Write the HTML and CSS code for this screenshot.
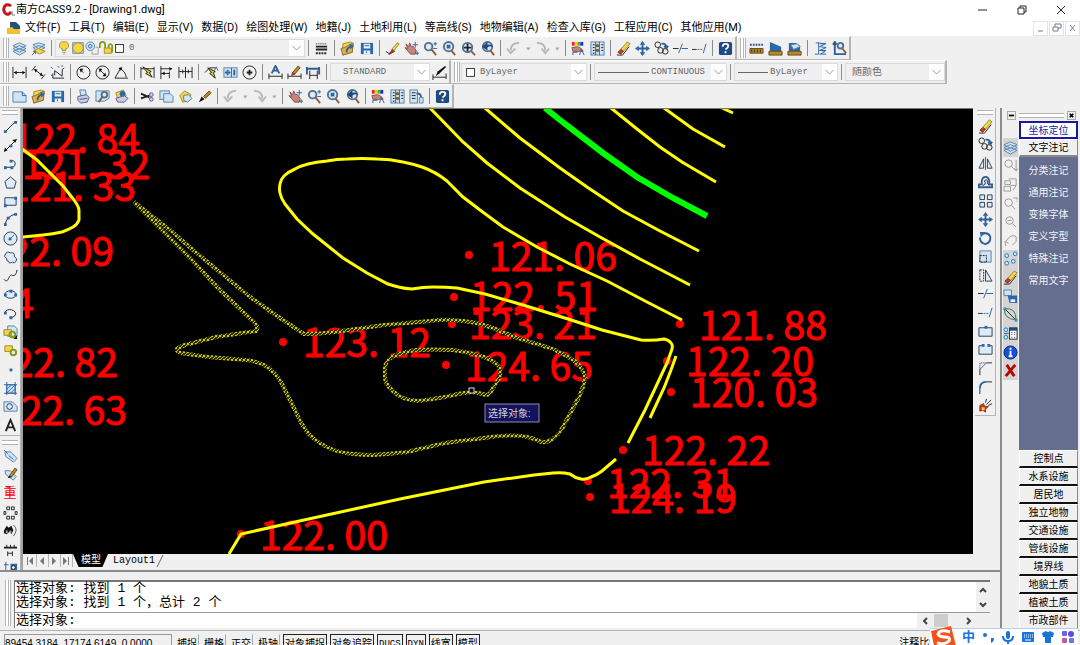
FILE: index.html
```html
<!DOCTYPE html>
<html lang="zh-CN">
<head>
    <meta charset="UTF-8">
    <meta name="viewport" content="width=device-width, initial-scale=1.0">
    <title>南方CASS9.2 - [Drawing1.dwg]</title>
    <link rel="stylesheet" href="styles.css">
</head>
<body>
    <!-- Icon sprite -->
    <svg class="sprite" aria-hidden="true">
        <symbol id="layers" viewBox="0 0 16 16"><path class="lb" d="M1 11l7-3 7 3-7 4zM1 8l7-3 7 3-7 4zM1 5l7-3 7 3-7 4z"/></symbol>
        <symbol id="layers2" viewBox="0 0 16 16"><path class="lb" d="M2 7l6-2 7 2-7 4zM2 4l6-2 7 2-7 4z"/><path class="y" d="M3 10l5-2 7 3-6 3z"/><path class="b" d="M1 15l4-4M2 11h3v3"/></symbol>
        <symbol id="bulb" viewBox="0 0 16 16"><path class="y" d="M8 1a4 4 0 0 0-2 8v2h4V9a4 4 0 0 0-2-8z"/><path class="g" d="M6 13h4M7 15h2"/></symbol>
        <symbol id="sun" viewBox="0 0 16 16"><rect class="lb" x="2" y="2" width="12" height="12"/><circle class="y" cx="8" cy="8" r="6"/></symbol>
        <symbol id="freeze" viewBox="0 0 16 16"><circle class="lb" cx="6" cy="6" r="5"/><circle class="b" cx="6" cy="6" r="2"/><path class="g" d="M12 7h3v8H8v-3"/></symbol>
        <symbol id="lock" viewBox="0 0 16 16"><path class="ol" d="M1 8V4q0-3 3-3t3 3v4"/><rect class="y" x="6" y="8" width="8" height="6"/><path class="ol" d="M11 8V5q2-3 4 0v8"/></symbol>
        <symbol id="swatch" viewBox="0 0 16 16"><rect class="w" x="3" y="4" width="9" height="9"/></symbol>
        <symbol id="weight" viewBox="0 0 16 16"><path class="k" d="M2 3h12" stroke-dasharray="1 1"/><path class="k2" d="M2 6h12M2 9h12"/><path class="k2" d="M2 13h12" stroke-dasharray="2 1"/></symbol>
        <symbol id="open" viewBox="0 0 16 16"><path class="y" d="M3 3l8-2 3 2-1 9-10 3z"/><path class="or" d="M3 15L1 8l4-1 9-5-1 10z"/><path class="b2" d="M7 12q0-5 5-6"/><path class="fb" d="M10 3l5 2-4 4z"/></symbol>
        <symbol id="save" viewBox="0 0 16 16"><path class="fb" d="M2 2h13v12H2z"/><path class="fw" d="M5 3h7v5H5zM5 10h7v4H5z"/><path class="b" d="M6 5h5M8 11v2"/></symbol>
        <symbol id="match" viewBox="0 0 16 16"><path class="k" d="M1 11l4 3 5-3"/><path class="y" d="M7 9l6-7 2 1-6 8z"/><path class="rd" d="M4 14l4-5 2 2z"/></symbol>
        <symbol id="pan" viewBox="0 0 16 16"><path class="hand" d="M2 3l3 3 1-4 2 4 2 0 3 4-1 4H7L1 7l3 1z"/><path class="b" d="M12 1v6M9 4h6M14 11v4M12 13h4"/></symbol>
        <symbol id="zoom" viewBox="0 0 16 16"><circle class="lens" cx="6" cy="6" r="4"/><path class="h" d="M9 9l5 6"/><path class="b" d="M11 3h4M13 1v4M11 8h4"/></symbol>
        <symbol id="zoomwin" viewBox="0 0 16 16"><circle class="lens" cx="7" cy="6" r="5"/><path class="h" d="M10 10l4 5"/><rect class="fb" x="5" y="4" width="4" height="4"/></symbol>
        <symbol id="zoomext" viewBox="0 0 16 16"><circle class="lens" cx="7" cy="7" r="5"/><path class="h" d="M11 11l4 4"/><path class="k2" d="M7 3v8M3 7h8"/></symbol>
        <symbol id="zoomprev" viewBox="0 0 16 16"><circle class="lens" cx="8" cy="6" r="5"/><path class="h" d="M11 10l4 5"/><path class="nv" d="M2 6l6-5v3q5-1 6 2-4-1-6 1v3z"/></symbol>
        <symbol id="undo" viewBox="0 0 16 16"><path class="gr" d="M14 2Q5 2 5 10M1 8l4 5 5-5"/></symbol>
        <symbol id="redo" viewBox="0 0 16 16"><path class="gr" d="M2 2q9 0 9 8M7 8l4 5 4-5"/></symbol>
        <symbol id="drop" viewBox="0 0 8 16"><path class="fg" d="M2 7h5L4 10z"/></symbol>
        <symbol id="palette" viewBox="0 0 16 16"><path fill="#e22" d="M1 1h3v4H1z"/><path fill="#fc0" d="M4 1h3v4H4z"/><path fill="#3b3" d="M7 1h3v4H7z"/><path fill="#22d" d="M10 1h3v4h-3z"/><path class="hand" d="M1 7l6-1 4 2 2 3-4 0-7 0z"/><path class="b" d="M2 15v-3h5M9 15l2-6 3 6"/></symbol>
        <symbol id="props" viewBox="0 0 16 16"><rect class="lb" x="1" y="1" width="14" height="14"/><path class="b" d="M6 1v14M10 1v14"/><path class="k" d="M3 4h2M3 7h2M3 10h2M3 13h2M12 4h2M12 7h2M12 10h2"/><path class="br" d="M7 4h2v2H7zM7 9h2v2H7z"/></symbol>
        <symbol id="sheet" viewBox="0 0 16 16"><rect class="lb" x="1" y="1" width="8" height="14"/><path class="k" d="M3 4h4M3 7h4M3 10h4"/><path class="b2" d="M8 5q5-1 5 5"/><path class="lb" d="M11 9h4v6h-4z"/></symbol>
        <symbol id="erase" viewBox="0 0 16 16"><path class="y" d="M5 9l7-8 3 2-7 8z"/><path class="rd" d="M2 12l3-3 3 2-3 3z"/><path class="k" d="M1 15h6l7-9"/></symbol>
        <symbol id="move" viewBox="0 0 16 16"><path class="b2" d="M8 2v12M2 8h12"/><path class="fb" d="M5 4l3-4 3 4zM5 12l3 4 3-4zM4 5L0 8l4 3zM12 5l4 3-4 3z"/></symbol>
        <symbol id="copy" viewBox="0 0 16 16"><circle class="k" cx="4" cy="4" r="3"/><circle class="k" cx="7" cy="10" r="3"/><circle class="k" cx="12" cy="11" r="3"/><path class="b2" d="M8 3q5-1 5 4M11 5l2 3 2-3"/></symbol>
        <symbol id="trim" viewBox="0 0 16 16"><path class="k" d="M0 8h6"/><path class="b" d="M10 3L6 13M9 8h7" /></symbol>
        <symbol id="extend" viewBox="0 0 16 16"><path class="k" d="M0 9h5"/><path class="b" d="M6 9h6" stroke-dasharray="2 1"/><path class="b" d="M15 3l-3 10"/></symbol>
        <symbol id="help" viewBox="0 0 16 16"><rect class="nv" x="1" y="1" width="14" height="14" rx="2"/><path class="wl" d="M5 6q0-3 3-3t3 2-3 4M8 11v2"/></symbol>
        <symbol id="dist" viewBox="0 0 16 16"><path class="b2" d="M1 4h14" stroke-dasharray="2 1"/><path class="br" d="M1 8h14v5H1z"/><path class="k" d="M3 12V9M6 12V9M9 12V9M12 12V9"/></symbol>
        <symbol id="area" viewBox="0 0 16 16"><path class="fb" d="M2 1l12 5v5H2z"/><path class="br" d="M1 11h14v4H1z"/></symbol>
        <symbol id="region" viewBox="0 0 16 16"><path class="fb" d="M2 2h7l5 3v6H2z"/><path class="lb" d="M4 4l7-1 3 3-7 3z"/><path class="br" d="M1 11h14v4H1z"/></symbol>
        <symbol id="list" viewBox="0 0 16 16"><path class="b" d="M3 2h3v12H2M6 2l7 1-6 3 7 1-7 3 6 1-5 3M8 3h6M8 10h6M7 14h7"/></symbol>
        <symbol id="locate" viewBox="0 0 16 16"><path class="b2" d="M3 3v11h12M1 4l2-3 2 3"/><circle class="lens" cx="9" cy="5" r="3"/><path class="h" d="M11 8l4 5"/></symbol>
        <symbol id="dim" viewBox="0 0 16 16"><path class="k" d="M1 2v12M15 2v12M2 8h12"/><path class="fk" d="M2 8l3-2v4zM14 8l-3-2v4z"/></symbol>
        <symbol id="dimal" viewBox="0 0 16 16"><path class="k" d="M5 1L1 6M15 10l-4 5M4 5l8 6"/><path class="fk" d="M3 4l4 1-2 3zM13 12l-4-1 2-3z"/></symbol>
        <symbol id="ordi" viewBox="0 0 16 16"><path class="k" d="M3 14h12M3 14V9M5 11V6l8 6V5l2-2"/><path class="b" d="M1 2l2 2M8 1l2 2M1 11h2M12 1h2"/></symbol>
        <symbol id="rad" viewBox="0 0 16 16"><circle class="k" cx="8" cy="8" r="7"/><path class="k" d="M8 8L4 5"/><path class="fk" d="M4 4h4L5 8z"/></symbol>
        <symbol id="dia" viewBox="0 0 16 16"><circle class="k" cx="8" cy="8" r="7"/><path class="k" d="M4 4l8 8"/><path class="fk" d="M4 4h4L5 8zM12 12H8l3-4z"/></symbol>
        <symbol id="ang" viewBox="0 0 16 16"><path class="k" d="M8 2L1 14h14M6 4q6 2 7 9"/><path class="fk" d="M5 3l4 0-2 3z"/></symbol>
        <symbol id="qdim" viewBox="0 0 16 16"><path class="k" d="M1 2v12M15 2v12M1 4h14"/><path class="yk" d="M3 2l9 5-2 1 3 5-7-4 2-1z"/></symbol>
        <symbol id="base" viewBox="0 0 16 16"><path class="k" d="M2 1v14M2 4h12M2 9h9M11 7v7"/><path class="fk" d="M14 4l-3-2v4zM3 9l3-2v4z"/></symbol>
        <symbol id="cont" viewBox="0 0 16 16"><path class="k" d="M1 2v12M8 2v12M15 2v12M1 7h14M5 5v4M11 5v4"/></symbol>
        <symbol id="leader" viewBox="0 0 16 16"><path class="yk" d="M4 3l8 4-2 1 2 6-6-5 2-1z"/><path class="k" d="M1 8l5-5h6"/><path class="b" d="M11 6l2-4 2 4"/></symbol>
        <symbol id="tol" viewBox="0 0 16 16"><rect class="lb" x="1" y="3" width="14" height="10"/><path class="b" d="M9 3v10M2 8h6M5 5v6"/><circle class="b" cx="5" cy="8" r="2"/><path class="b2" d="M12 5v6"/></symbol>
        <symbol id="cen" viewBox="0 0 16 16"><circle class="k" cx="8" cy="8" r="7"/><path class="k2" d="M8 5v6M5 8h6"/></symbol>
        <symbol id="dimA" viewBox="0 0 16 16"><path class="b2" d="M4 9l4-8 4 8M5 6h6"/><path class="k" d="M1 9v6M15 9v6M1 12h14"/></symbol>
        <symbol id="dimE" viewBox="0 0 16 16"><path class="k" d="M1 9v6M15 9v6M1 12h14"/><path class="br" d="M6 8l6-7 2 2-6 7z"/><path class="rd" d="M5 11l1-3 2 2z"/></symbol>
        <symbol id="dimU" viewBox="0 0 16 16"><path class="b2" d="M1 2v8M14 2v8M1 4h13"/><path class="k" d="M4 6v9M12 6v9M4 11h8"/></symbol>
        <symbol id="dimS" viewBox="0 0 16 16"><path class="k" d="M1 10v6M15 9v6M1 13h14"/><path class="fk" d="M4 12l2-5 8-6 1 1-7 7z"/></symbol>
        <symbol id="new" viewBox="0 0 16 16"><path class="lb" d="M1 3h10l4 4v7H1z"/><path class="b" d="M11 3v4h4"/></symbol>
        <symbol id="print" viewBox="0 0 16 16"><path class="lb" d="M4 1h6l1 6H5z"/><path class="pl" d="M2 8l9-2 3 3-2 5-7 1-3-3zM4 11l8-1"/></symbol>
        <symbol id="preview" viewBox="0 0 16 16"><path class="lb" d="M1 2h14v8L10 13H1z"/><circle class="lens" cx="10" cy="6" r="3"/><path class="h" d="M8 8l-4 6"/></symbol>
        <symbol id="publish" viewBox="0 0 16 16"><path class="y" d="M2 4l8-3 3 6-9 4z"/><path class="pl" d="M2 10l9-3 4 3-4 4H4z"/><circle class="fb" cx="9" cy="5" r="3"/></symbol>
        <symbol id="cut" viewBox="0 0 16 16"><path class="k2" d="M1 5l9 4M1 10l9-3"/><circle class="pl" cx="12" cy="6" r="2"/><circle class="pl" cx="12" cy="11" r="2"/></symbol>
        <symbol id="cpy" viewBox="0 0 16 16"><rect class="lb" x="1" y="2" width="10" height="9"/><path class="lb" d="M5 5h7l3 3v6H5z"/></symbol>
        <symbol id="paste" viewBox="0 0 16 16"><path class="y" d="M2 7l5-5 7 4-4 7-5 1z"/><path class="lb" d="M6 7l5-1 4 4-5 4-4-2z"/></symbol>
        <symbol id="brush" viewBox="0 0 16 16"><path class="br" d="M7 8l6-6 2 2-6 6z"/><path class="fk" d="M2 14l3-6 3 3z"/></symbol>
        <symbol id="line" viewBox="0 0 16 16"><path class="k" d="M3 13L13 3"/><path class="fb" d="M1 12h3v3H1zM12 2h3v3h-3z"/></symbol>
        <symbol id="xline" viewBox="0 0 16 16"><path class="k" d="M3 13L13 3"/><path class="fk" d="M1 15l1-5 3 3zM15 1l-5 1 3 3z"/><path class="fb" d="M7 7h3v3H7z"/></symbol>
        <symbol id="pline" viewBox="0 0 16 16"><path class="k" d="M2 12h8M8 5h3q4 3 0 7"/><path class="fb" d="M1 11h3v3H1zM8 11h3v3H8zM7 4h3v3H7z"/></symbol>
        <symbol id="poly" viewBox="0 0 16 16"><path class="ld" d="M8 2l6 5-2 7H4L2 7z"/></symbol>
        <symbol id="rect" viewBox="0 0 16 16"><path class="ld" d="M2 4h12v8H2z"/><path class="fb" d="M1 11h3v3H1zM12 3h3v3h-3z"/></symbol>
        <symbol id="arc" viewBox="0 0 16 16"><path class="k" d="M2 14Q4 4 14 2"/><path class="fb" d="M1 12h3v3H1zM4 5h3v3H4zM12 1h3v3h-3z"/></symbol>
        <symbol id="circle" viewBox="0 0 16 16"><circle class="ld" cx="8" cy="8" r="7"/><path class="b" d="M8 8l4-4"/><path class="fb" d="M6 7h3v3H6z"/></symbol>
        <symbol id="cloud" viewBox="0 0 16 16"><path class="ld" d="M4 9Q0 7 3 4q1-3 5-1 5-1 4 4 4 2 2 5-2 3-4 1-4 2-4-1-3 0-2-3z"/></symbol>
        <symbol id="spline" viewBox="0 0 16 16"><path class="k" d="M1 12q3 4 5-1t4-3q4 1 5-6"/></symbol>
        <symbol id="ellipse" viewBox="0 0 16 16"><ellipse class="ld" cx="8" cy="8" rx="6" ry="4"/><path class="fb" d="M1 7h3v3H1zM12 7h3v3h-3zM7 3h3v3H7z"/></symbol>
        <symbol id="earc" viewBox="0 0 16 16"><path class="k" d="M2 7q2-4 7-3 6 2 4 6-2 3-6 2"/><path class="fb" d="M1 6h3v3H1zM7 11h3v3H7z"/></symbol>
        <symbol id="insert" viewBox="0 0 16 16"><path class="lb" d="M5 1h7l3 3v8H5z"/><path class="y" d="M1 5h8v6H1z"/><circle class="ol" cx="10" cy="10" r="3"/><path class="fk" d="M15 11v4h-4z"/></symbol>
        <symbol id="block" viewBox="0 0 16 16"><path class="y" d="M2 3h8v6H2z"/><circle class="ld" cx="11" cy="10" r="3"/><circle class="ol" cx="11" cy="10" r="3"/></symbol>
        <symbol id="point" viewBox="0 0 16 16"><path class="fb" d="M7 7h3v3H7z"/></symbol>
        <symbol id="hatch" viewBox="0 0 16 16"><path class="lb" d="M4 4h9v9H4z"/><path class="b" d="M1 4h14M1 13h14M4 1v14M13 1v14M4 9l5-5M4 13l9-9M8 13l5-5"/></symbol>
        <symbol id="reg" viewBox="0 0 16 16"><path class="lb" d="M1 3h9l5 5v5H1z"/><circle class="ld" cx="7" cy="8" r="3"/></symbol>
        <symbol id="mtext" viewBox="0 0 16 16"><path class="k2" d="M3 14L8 2l5 12M5 10h6"/></symbol>
        <symbol id="tag" viewBox="0 0 16 16"><path class="lb" d="M2 3h6l7 7-4 4-8-6z"/><path class="b" d="M1 1l4 4M6 7l5 4"/></symbol>
        <symbol id="tagedit" viewBox="0 0 16 16"><path class="lb" d="M2 4h6l6 6-3 4-8-6z"/><path class="br" d="M7 9l6-8 2 2-6 8z"/><path class="fk" d="M5 12l2-3 2 2z"/></symbol>
        <symbol id="nodes" viewBox="0 0 16 16"><path class="k" d="M4 2h3v3H4zM9 2h3v3H9zM1 7h2v3H1zM13 7h2v3h-2zM4 12h3v3H4zM9 12h3v3H9z"/></symbol>
        <symbol id="find" viewBox="0 0 16 16"><path class="fk" d="M1 8l3-5 2 2 3-2 2 5-2 4-2-3-3 3-3-1z"/><path class="fg" d="M3 8h2v3H3zM7 8h2v3H7z"/><path class="b" d="M11 2q6 5 0 12"/></symbol>
        <symbol id="gate" viewBox="0 0 16 16"><path class="k2" d="M1 6h14"/><path class="k" d="M4 3v3M8 3v3M12 3v3M5 10v5M10 10v5M5 12h5"/></symbol>
        <symbol id="pinbox" viewBox="0 0 16 16"><path class="b" d="M3 2v13M1 5h5"/><rect class="fb" x="8" y="4" width="7" height="8"/><circle class="w" cx="11" cy="8" r="2"/></symbol>
        <symbol id="mirror" viewBox="0 0 16 16"><path class="ld" d="M6 3v10H1zM10 3v10h5z"/><path class="b" d="M8 1v14"/></symbol>
        <symbol id="offset" viewBox="0 0 16 16"><path class="b2" d="M1 13h14v-3h-3V6q-1-4-4-4T4 6v4H1z"/><path class="k" d="M5 11q4 0 2-5 2-2 3 0-1 4 2 5"/></symbol>
        <symbol id="array" viewBox="0 0 16 16"><path class="ld" d="M2 2h5v5H2zM10 2h5v5h-5zM2 10h5v5H2zM10 10h5v5h-5z"/></symbol>
        <symbol id="rotate" viewBox="0 0 16 16"><path class="b2" d="M5 3q6-2 8 3 1 6-5 8-6-1-6-7"/><path class="fb" d="M2 1h6L3 7z"/></symbol>
        <symbol id="scale" viewBox="0 0 16 16"><path class="lb" d="M2 2h12v12H2z"/><path class="k" d="M2 7h7v7H2z" stroke-dasharray="2 1"/></symbol>
        <symbol id="stretch" viewBox="0 0 16 16"><path class="k" d="M2 2v12h4V2z" stroke-dasharray="2 1"/><path class="ld" d="M8 2l7 12H8z"/></symbol>
        <symbol id="breakpt" viewBox="0 0 16 16"><path class="ld" d="M1 4h14v9H1z"/><path class="fb" d="M7 2h3v3H7z"/></symbol>
        <symbol id="break" viewBox="0 0 16 16"><path class="ld" d="M5 4H1v9h14V4h-4"/><path class="fb" d="M4 2h3v3H4zM10 2h3v3h-3z"/></symbol>
        <symbol id="chamfer" viewBox="0 0 16 16"><path class="k" d="M2 15V9M9 2h6"/><path class="b" d="M2 9l7-7"/><path class="k" d="M2 9V2h7" stroke-dasharray="1 1"/></symbol>
        <symbol id="fillet" viewBox="0 0 16 16"><path class="k" d="M2 15V9M9 2h6"/><path class="b2" d="M2 9q0-7 7-7"/></symbol>
        <symbol id="explode" viewBox="0 0 16 16"><path class="rd" d="M2 8l4-2 1 3 4 0-3 3 0 3-3-2-3 1z"/><path class="yf" d="M4 10h3v3H4z"/><path class="k" d="M9 7l5-5M11 8l4-2M8 5l1-4"/></symbol>
        <symbol id="zg" viewBox="0 0 16 16"><circle class="g" cx="6" cy="6" r="4"/><path class="g" d="M9 9l4 4M14 2v11M12 11l2 3 2-3"/></symbol>
        <symbol id="zg2" viewBox="0 0 16 16"><circle class="g" cx="6" cy="7" r="4"/><path class="g" d="M9 10l5 5M11 2h4v4" stroke-dasharray="6 1"/></symbol>
        <symbol id="zg3" viewBox="0 0 16 16"><circle class="g" cx="7" cy="7" r="4"/><path class="g" d="M10 10l4 4M5 7h4"/></symbol>
        <symbol id="boxes" viewBox="0 0 16 16"><path class="g" d="M2 4h6v4H2zM6 2h8v7H8M1 10h7v5H1zM14 9l-3 5"/></symbol>
        <symbol id="back" viewBox="0 0 16 16"><path class="g" d="M3 14L2 9l4 2M3 9q6-9 11-5v5l-4 4"/></symbol>
        <symbol id="dots" viewBox="0 0 16 16"><circle class="cy" cx="4" cy="5" r="2"/><circle class="cy" cx="13" cy="3" r="2"/><circle class="cy" cx="4" cy="13" r="2"/><circle class="cy" cx="11" cy="11" r="2"/></symbol>
        <symbol id="disk" viewBox="0 0 16 16"><path class="lb" d="M1 1h8v6H1z"/><path class="fb" d="M5 7h10v8H7z"/><path class="fw" d="M8 11h5v3H8z"/></symbol>
        <symbol id="curve" viewBox="0 0 16 16"><path class="k" d="M1 1l14 14"/><path class="gn" d="M2 2q12-2 12 12M2 2q-2 10 12 12"/><path class="cy" d="M1 1h2v2H1zM13 13h2v2h-2z"/></symbol>
        <symbol id="calc" viewBox="0 0 16 16"><circle class="cy" cx="3" cy="4" r="2"/><circle class="cy" cx="3" cy="12" r="2"/><path class="b" d="M1 8h5"/><rect class="w" x="7" y="2" width="8" height="12"/><path class="nv" d="M7 2h8v3H7z"/><path class="k" d="M9 7h1M12 7h1M9 9h1M12 9h1M9 12h1M12 12h1"/></symbol>
        <symbol id="info" viewBox="0 0 16 16"><circle fill="#1450d8" stroke="#0a2a80" cx="8" cy="8" r="7"/><path class="wl" d="M8 3v2M7 7h1v5M6 12h4"/></symbol>
        <symbol id="cross" viewBox="0 0 16 16"><path d="M4 2l8 12M13 2L3 14" stroke="#b80000" stroke-width="3"/></symbol>
        <symbol id="chev" viewBox="0 0 12 12"><path class="g" d="M2 4l4 4 4-4"/></symbol>
        <pattern id="sel" width="4" height="4" patternUnits="userSpaceOnUse"><rect width="4" height="4" fill="#2c2c00"/><path d="M0 0h1v1H0zM2 1h1v1H2zM1 2h1v1H1zM3 3h1v1H3zM3 0h1v1H3zM0 3h1v1H0z" fill="#d0d000"/></pattern>
    </svg>

    <header class="titlebar">
        <svg class="logo" viewBox="0 0 14 14"><path d="M9 3Q7 1 4 2 1 4 2 8q1 4 5 3l2-2" fill="none" stroke="#c4141c" stroke-width="3"/><path d="M10 8v4h3" fill="none" stroke="#777"/></svg>
        <h1>南方CASS9.2 - [Drawing1.dwg]</h1>
        <div class="winbtns">
            <button aria-label="最小化"><svg viewBox="0 0 10 10"><path d="M0 5h9"/></svg></button>
            <button aria-label="还原"><svg viewBox="0 0 10 10"><path d="M1 3h6v6H1zM3 3V1h6v6H7"/></svg></button>
            <button aria-label="关闭"><svg viewBox="0 0 10 10"><path d="M1 1l8 8M9 1L1 9"/></svg></button>
        </div>
    </header>

    <nav class="menubar">
        <svg class="docicon" viewBox="0 0 14 14"><path d="M3 1h6l4 4v6H3z" fill="#24507c"/><path d="M0 7l5-1 2 2h6v5H0z" fill="#f0c030"/></svg>
        <button>文件(F)</button>
        <button>工具(T)</button>
        <button>编辑(E)</button>
        <button>显示(V)</button>
        <button>数据(D)</button>
        <button>绘图处理(W)</button>
        <button>地籍(J)</button>
        <button>土地利用(L)</button>
        <button>等高线(S)</button>
        <button>地物编辑(A)</button>
        <button>检查入库(G)</button>
        <button>工程应用(C)</button>
        <button>其他应用(M)</button>
        <div class="docbtns">
            <button aria-label="最小化图形"><svg viewBox="0 0 10 10"><path d="M2 8h5"/></svg></button>
            <button aria-label="还原图形"><svg viewBox="0 0 10 10"><path d="M1 4h5v4H1zM3 4V1h6v4H6"/></svg></button>
            <button aria-label="关闭图形"><svg viewBox="0 0 10 10"><path d="M2 2l5 6M7 2L2 8"/></svg></button>
        </div>
    </nav>

    <!-- Toolbars -->
    <div class="row">
        <div class="toolbar">
            <i class="grip"></i>
            <button class="tool" aria-label="图层"><svg><use href="#layers"/></svg></button>
            <button class="tool" aria-label="图层置为当前"><svg><use href="#layers2"/></svg></button>
            <i class="sep"></i>
            <div class="combo layer">
                <svg><use href="#bulb"/></svg><svg><use href="#sun"/></svg><svg><use href="#freeze"/></svg><svg><use href="#lock"/></svg><svg><use href="#swatch"/></svg>
                <select aria-label="图层列表"><option>0</option></select>
                <svg class="chev"><use href="#chev"/></svg>
            </div>
            <i class="sep"></i>
            <button class="tool" aria-label="线宽"><svg><use href="#weight"/></svg></button>
            <i class="sep"></i>
            <button class="tool" aria-label="打开"><svg><use href="#open"/></svg></button>
            <button class="tool" aria-label="保存"><svg><use href="#save"/></svg></button>
            <i class="sep"></i>
            <button class="tool" aria-label="特性匹配"><svg><use href="#match"/></svg></button>
            <button class="tool" aria-label="平移"><svg><use href="#pan"/></svg></button>
            <button class="tool" aria-label="实时缩放"><svg><use href="#zoom"/></svg></button>
            <button class="tool" aria-label="窗口缩放"><svg><use href="#zoomwin"/></svg></button>
            <button class="tool" aria-label="范围缩放"><svg><use href="#zoomext"/></svg></button>
            <button class="tool" aria-label="上一个视图"><svg><use href="#zoomprev"/></svg></button>
            <i class="sep"></i>
            <button class="tool" aria-label="放弃"><svg><use href="#undo"/></svg></button>
            <button class="tool drop" aria-label="放弃列表"><svg><use href="#drop"/></svg></button>
            <button class="tool" aria-label="重做"><svg><use href="#redo"/></svg></button>
            <button class="tool drop" aria-label="重做列表"><svg><use href="#drop"/></svg></button>
            <i class="sep"></i>
            <button class="tool" aria-label="特性"><svg><use href="#palette"/></svg></button>
            <button class="tool" aria-label="设计中心"><svg><use href="#props"/></svg></button>
            <i class="sep"></i>
            <button class="tool" aria-label="删除"><svg><use href="#erase"/></svg></button>
            <button class="tool" aria-label="移动"><svg><use href="#move"/></svg></button>
            <button class="tool" aria-label="复制"><svg><use href="#copy"/></svg></button>
            <button class="tool" aria-label="修剪"><svg><use href="#trim"/></svg></button>
            <button class="tool" aria-label="延伸"><svg><use href="#extend"/></svg></button>
            <i class="sep"></i>
            <button class="tool" aria-label="帮助"><svg><use href="#help"/></svg></button>
        </div>
        <div class="toolbar">
            <i class="grip"></i>
            <button class="tool" aria-label="距离"><svg><use href="#dist"/></svg></button>
            <button class="tool" aria-label="面积"><svg><use href="#area"/></svg></button>
            <button class="tool" aria-label="面域特性"><svg><use href="#region"/></svg></button>
            <i class="sep"></i>
            <button class="tool" aria-label="列表"><svg><use href="#list"/></svg></button>
            <button class="tool" aria-label="定位点"><svg><use href="#locate"/></svg></button>
        </div>
    </div>

    <div class="row">
        <div class="toolbar">
            <i class="grip"></i>
            <button class="tool" aria-label="线性标注"><svg><use href="#dim"/></svg></button>
            <button class="tool" aria-label="对齐标注"><svg><use href="#dimal"/></svg></button>
            <button class="tool" aria-label="坐标标注"><svg><use href="#ordi"/></svg></button>
            <i class="sep"></i>
            <button class="tool" aria-label="半径标注"><svg><use href="#rad"/></svg></button>
            <button class="tool" aria-label="直径标注"><svg><use href="#dia"/></svg></button>
            <button class="tool" aria-label="角度标注"><svg><use href="#ang"/></svg></button>
            <i class="sep"></i>
            <button class="tool" aria-label="快速标注"><svg><use href="#qdim"/></svg></button>
            <button class="tool" aria-label="基线标注"><svg><use href="#base"/></svg></button>
            <button class="tool" aria-label="连续标注"><svg><use href="#cont"/></svg></button>
            <i class="sep"></i>
            <button class="tool" aria-label="快速引线"><svg><use href="#leader"/></svg></button>
            <button class="tool" aria-label="公差"><svg><use href="#tol"/></svg></button>
            <button class="tool" aria-label="圆心标记"><svg><use href="#cen"/></svg></button>
            <i class="sep"></i>
            <button class="tool" aria-label="编辑标注"><svg><use href="#dimA"/></svg></button>
            <button class="tool" aria-label="编辑标注文字"><svg><use href="#dimE"/></svg></button>
            <button class="tool" aria-label="标注更新"><svg><use href="#dimU"/></svg></button>
            <i class="sep"></i>
            <div class="combo style">
                <select aria-label="标注样式列表"><option>STANDARD</option></select>
                <svg class="chev"><use href="#chev"/></svg>
            </div>
            <button class="tool" aria-label="标注样式"><svg><use href="#dimS"/></svg></button>
        </div>
        <div class="toolbar">
            <i class="grip"></i>
            <div class="combo color">
                <svg><use href="#swatch"/></svg>
                <select aria-label="颜色"><option>ByLayer</option></select>
                <svg class="chev"><use href="#chev"/></svg>
            </div>
            <i class="sep"></i>
            <div class="combo ltype">
                <i class="rule long"></i>
                <select aria-label="线型"><option>CONTINUOUS</option></select>
                <svg class="chev"><use href="#chev"/></svg>
            </div>
            <i class="sep"></i>
            <div class="combo lweight">
                <i class="rule"></i>
                <select aria-label="线宽列表"><option>ByLayer</option></select>
                <svg class="chev"><use href="#chev"/></svg>
            </div>
            <i class="sep"></i>
            <div class="combo plot">
                <select aria-label="打印样式"><option>随颜色</option></select>
                <svg class="chev"><use href="#chev"/></svg>
            </div>
        </div>
    </div>

    <div class="row">
        <div class="toolbar">
            <i class="grip"></i>
            <button class="tool" aria-label="新建"><svg><use href="#new"/></svg></button>
            <button class="tool" aria-label="打开文件"><svg><use href="#open"/></svg></button>
            <button class="tool" aria-label="保存文件"><svg><use href="#save"/></svg></button>
            <i class="sep"></i>
            <button class="tool" aria-label="打印"><svg><use href="#print"/></svg></button>
            <button class="tool" aria-label="打印预览"><svg><use href="#preview"/></svg></button>
            <button class="tool" aria-label="发布"><svg><use href="#publish"/></svg></button>
            <i class="sep"></i>
            <button class="tool" aria-label="剪切"><svg><use href="#cut"/></svg></button>
            <button class="tool" aria-label="复制到剪贴板"><svg><use href="#cpy"/></svg></button>
            <button class="tool" aria-label="粘贴"><svg><use href="#paste"/></svg></button>
            <button class="tool" aria-label="格式刷"><svg><use href="#brush"/></svg></button>
            <i class="sep"></i>
            <button class="tool" aria-label="撤销"><svg><use href="#undo"/></svg></button>
            <button class="tool drop" aria-label="撤销列表"><svg><use href="#drop"/></svg></button>
            <button class="tool" aria-label="恢复"><svg><use href="#redo"/></svg></button>
            <button class="tool drop" aria-label="恢复列表"><svg><use href="#drop"/></svg></button>
            <i class="sep"></i>
            <button class="tool" aria-label="平移视图"><svg><use href="#pan"/></svg></button>
            <button class="tool" aria-label="缩放"><svg><use href="#zoom"/></svg></button>
            <button class="tool" aria-label="缩放窗口"><svg><use href="#zoomwin"/></svg></button>
            <button class="tool" aria-label="缩放上一个"><svg><use href="#zoomprev"/></svg></button>
            <i class="sep"></i>
            <button class="tool" aria-label="对象特性"><svg><use href="#palette"/></svg></button>
            <button class="tool" aria-label="工具选项板"><svg><use href="#props"/></svg></button>
            <button class="tool" aria-label="图纸集"><svg><use href="#sheet"/></svg></button>
            <i class="sep"></i>
            <button class="tool" aria-label="帮助主题"><svg><use href="#help"/></svg></button>
        </div>
    </div>

    <div class="workspace">
        <div class="main">
            <div class="editor">
                <div class="side left">
                    <div class="vbar draw">
                        <i class="hgrip"></i>
                        <button class="tool" aria-label="直线"><svg><use href="#line"/></svg></button>
                        <button class="tool" aria-label="构造线"><svg><use href="#xline"/></svg></button>
                        <button class="tool" aria-label="多段线"><svg><use href="#pline"/></svg></button>
                        <button class="tool" aria-label="正多边形"><svg><use href="#poly"/></svg></button>
                        <button class="tool" aria-label="矩形"><svg><use href="#rect"/></svg></button>
                        <button class="tool" aria-label="圆弧"><svg><use href="#arc"/></svg></button>
                        <button class="tool" aria-label="圆"><svg><use href="#circle"/></svg></button>
                        <button class="tool" aria-label="修订云线"><svg><use href="#cloud"/></svg></button>
                        <button class="tool" aria-label="样条曲线"><svg><use href="#spline"/></svg></button>
                        <button class="tool" aria-label="椭圆"><svg><use href="#ellipse"/></svg></button>
                        <button class="tool" aria-label="椭圆弧"><svg><use href="#earc"/></svg></button>
                        <button class="tool" aria-label="插入块"><svg><use href="#insert"/></svg></button>
                        <button class="tool" aria-label="创建块"><svg><use href="#block"/></svg></button>
                        <button class="tool" aria-label="点"><svg><use href="#point"/></svg></button>
                        <button class="tool" aria-label="图案填充"><svg><use href="#hatch"/></svg></button>
                        <button class="tool" aria-label="面域"><svg><use href="#reg"/></svg></button>
                        <button class="tool" aria-label="多行文字"><svg><use href="#mtext"/></svg></button>
                    </div>
                    <div class="vbar survey">
                        <i class="hgrip"></i>
                        <button class="tool" aria-label="查看编码"><svg><use href="#tag"/></svg></button>
                        <button class="tool" aria-label="加入编码"><svg><use href="#tagedit"/></svg></button>
                        <button class="tool redo-all">重</button>
                        <button class="tool" aria-label="批量选取"><svg><use href="#nodes"/></svg></button>
                        <button class="tool" aria-label="查找"><svg><use href="#find"/></svg></button>
                        <button class="tool" aria-label="线型换向"><svg><use href="#gate"/></svg></button>
                        <button class="tool" aria-label="坎高"><svg><use href="#pinbox"/></svg></button>
                    </div>
                </div>

                <div class="viewport">
                    <svg class="drawing" viewBox="23 109 950 445" preserveAspectRatio="xMinYMin slice">
                        <g class="elev">
                            <text x="12" y="153">122. 84</text>
                            <text x="22" y="179">121. 32</text>
                            <text x="8" y="201">121. 33</text>
                            <text x="-14" y="266">122. 09</text>
                            <text x="12" y="318">4</text>
                            <text x="-10" y="377">122. 82</text>
                            <text x="-1" y="425">122. 63</text>
                            <text x="489" y="271">121. 06</text>
                            <text x="470" y="311">122. 51</text>
                            <text x="469" y="339">123. 21</text>
                            <text x="303" y="357">123. 12</text>
                            <text x="465" y="381">124. 65</text>
                            <text x="699" y="340">121. 88</text>
                            <text x="686" y="376">122. 20</text>
                            <text x="690" y="407">120. 03</text>
                            <text x="642" y="465">122. 22</text>
                            <text x="607" y="498">122. 31</text>
                            <text x="609" y="513">124. 19</text>
                            <text x="260" y="550">122. 00</text>
                        </g>
                        <g class="pts">
                            <circle cx="469" cy="255" r="4"/><circle cx="454" cy="297" r="4"/><circle cx="452" cy="324" r="4"/>
                            <circle cx="283" cy="342" r="4"/><circle cx="446" cy="365" r="4"/><circle cx="680" cy="324" r="4"/>
                            <circle cx="667" cy="361" r="4"/><circle cx="671" cy="392" r="4"/><circle cx="623" cy="450" r="4"/>
                            <circle cx="588" cy="481" r="4"/><circle cx="590" cy="497" r="4"/><circle cx="241" cy="534" r="4"/>
                        </g>
                        <g class="contour">
                            <path d="M22 149L37 160 50 173 63 186 74 200Q79 207 79 210L79 220Q77 225 73 227 68 230 62 232 53 234 43 235L22 237"/>
                            <path d="M682 320L647 302 607 281 570 264 537 247 503 227 480 210 463 197 447 181Q436 172 422 167 413 164 403 162 390 159 377 159 362 158 347 159 337 159 327 161 316 162 308 164 300 166 295 169 288 172 284 176 281 179 280 184 279 189 280 193 281 198 285 204L297 219 313 234 343 258 367 273 388 284Q399 288 412 289 423 287 433 287 446 287 457 288L485 294 523 305 568 319 602 330 641 340Q653 341 664 339 669 340 671 343 673 345 672 349L667 363 645 410 628 443"/>
                            <path d="M676 356L671 370 664 388 650 418"/>
                            <path d="M229 554L241 534 304 520 400 499 484 482 534 475 553 473Q562 472 570 474 575 478 581 479 586 480 591 477 597 475 602 471L616 459"/>
                            <path d="M430 108L463 142 487 163 520 188 565 217 600 237 640 259 690 285"/>
                            <path d="M485 108L520 138 560 168 587 187 623 211 660 231 699 251"/>
                            <path d="M611 108L637 129 660 147 682 162 716 182"/>
                            <path d="M664 108L693 129 725 147"/>
                            <path d="M722 108L733 113"/>
                        </g>
                        <path class="index" d="M545 108L560 120 603 153 637 177 673 198 707 216"/>
                        <g class="picked">
                            <path d="M134 202L170 230 193 250 250 297 280 318 304 334Q320 334 335 332L384 325 430 321Q444 319 453 320 465 321 477 323 496 328 514 337L553 349Q566 355 576 362 583 369 585 377 584 386 580 395L564 425Q560 433 555 437 549 443 541 442 534 438 522 436 511 435 499 436L445 443 407 452Q390 454 373 455 363 455 354 454 341 453 331 449 317 443 308 433 301 424 296 412L281 382Q274 371 264 365 255 361 246 360L208 357 181 353Q176 351 177 349 179 347 185 345L216 337 256 331Q259 328 255 323L220 290 190 258 170 238z"/>
                            <path d="M386 363Q389 358 396 355 405 352 415 350 434 349 453 350 469 352 484 357 495 361 499 367 501 371 500 377L493 388Q490 395 486 395 480 393 472 392 459 393 445 397L419 401Q411 401 403 398 395 394 390 388 385 383 385 377 384 370 386 363z"/>
                        </g>
                        <rect class="pickbox" x="469" y="388" width="5" height="5"/>
                        <rect class="tip" x="485" y="404" width="54" height="18"/>
                        <text class="tiptext" x="488" y="417">选择对象:</text>
                    </svg>
                    <div class="tabs">
                        <button class="nav" aria-label="第一个"><svg viewBox="0 0 8 8"><path d="M1 0h1v8H1zM7 0v8L3 4z"/></svg></button>
                        <button class="nav" aria-label="上一个"><svg viewBox="0 0 8 8"><path d="M6 0v8L2 4z"/></svg></button>
                        <button class="nav" aria-label="下一个"><svg viewBox="0 0 8 8"><path d="M2 0v8l4-4z"/></svg></button>
                        <button class="nav" aria-label="最后一个"><svg viewBox="0 0 8 8"><path d="M6 0h1v8H6zM1 0v8l4-4z"/></svg></button>
                        <button class="tab active">模型</button>
                        <button class="tab">Layout1</button>
                        <svg class="slash" viewBox="0 0 8 14"><path d="M7 1L1 13"/></svg>
                    </div>
                </div>

                <div class="side right">
                    <div class="vbar modify">
                        <i class="hgrip"></i>
                        <button class="tool" aria-label="删除对象"><svg><use href="#erase"/></svg></button>
                        <button class="tool" aria-label="复制对象"><svg><use href="#copy"/></svg></button>
                        <button class="tool" aria-label="镜像"><svg><use href="#mirror"/></svg></button>
                        <button class="tool" aria-label="偏移"><svg><use href="#offset"/></svg></button>
                        <button class="tool" aria-label="阵列"><svg><use href="#array"/></svg></button>
                        <button class="tool" aria-label="移动对象"><svg><use href="#move"/></svg></button>
                        <button class="tool" aria-label="旋转"><svg><use href="#rotate"/></svg></button>
                        <button class="tool" aria-label="比例"><svg><use href="#scale"/></svg></button>
                        <button class="tool" aria-label="拉伸"><svg><use href="#stretch"/></svg></button>
                        <button class="tool" aria-label="修剪对象"><svg><use href="#trim"/></svg></button>
                        <button class="tool" aria-label="延伸对象"><svg><use href="#extend"/></svg></button>
                        <button class="tool" aria-label="打断于点"><svg><use href="#breakpt"/></svg></button>
                        <button class="tool" aria-label="打断"><svg><use href="#break"/></svg></button>
                        <button class="tool" aria-label="倒角"><svg><use href="#chamfer"/></svg></button>
                        <button class="tool" aria-label="圆角"><svg><use href="#fillet"/></svg></button>
                        <button class="tool" aria-label="分解"><svg><use href="#explode"/></svg></button>
                    </div>
                </div>
            </div>

            <div class="command">
                <i class="grip"></i>
                <div class="console">
                    <div class="history">
                        <div class="lines">
                            <p>选择对象: 找到 1 个</p>
                            <p>选择对象: 找到 1 个，总计 2 个</p>
                        </div>
                        <div class="vscroll">
                            <svg viewBox="0 0 8 8"><path d="M1 6l3-3 3 3"/></svg>
                            <svg viewBox="0 0 8 8"><path d="M1 2l3 3 3-3"/></svg>
                        </div>
                    </div>
                    <div class="prompt">
                        <label for="cmd">选择对象:</label>
                        <input id="cmd" type="text">
                        <div class="hscroll">
                            <svg viewBox="0 0 8 8"><path d="M5 1L2 4l3 3"/></svg>
                            <i class="thumb"></i>
                            <svg viewBox="0 0 8 8"><path d="M3 1l3 3-3 3"/></svg>
                        </div>
                    </div>
                </div>
            </div>
        </div>

        <aside class="dock">
            <div class="dockhead">
                <button aria-label="折叠"><svg viewBox="0 0 8 8"><path d="M1 4h6"/></svg></button>
                <i class="hgrip"></i>
                <button aria-label="关闭面板"><svg viewBox="0 0 8 8"><path d="M2 2l4 4M6 2L2 6"/></svg></button>
            </div>
            <div class="dockbody">
                <div class="vbar quick">
                    <button class="tool on" aria-label="图层管理"><svg><use href="#layers"/></svg></button>
                    <button class="tool" aria-label="缩放工具"><svg><use href="#zg"/></svg></button>
                    <button class="tool" aria-label="视图切换"><svg><use href="#boxes"/></svg></button>
                    <button class="tool" aria-label="窗口放大"><svg><use href="#zg2"/></svg></button>
                    <button class="tool" aria-label="缩小"><svg><use href="#zg3"/></svg></button>
                    <button class="tool" aria-label="返回"><svg><use href="#back"/></svg></button>
                    <button class="tool on" aria-label="展点"><svg><use href="#dots"/></svg></button>
                    <button class="tool on" aria-label="擦除"><svg><use href="#erase"/></svg></button>
                    <button class="tool on" aria-label="存盘"><svg><use href="#disk"/></svg></button>
                    <button class="tool on" aria-label="曲线"><svg><use href="#curve"/></svg></button>
                    <button class="tool on" aria-label="计算"><svg><use href="#calc"/></svg></button>
                    <button class="tool on" aria-label="信息"><svg><use href="#info"/></svg></button>
                    <button class="tool on" aria-label="退出"><svg><use href="#cross"/></svg></button>
                </div>
                <div class="panel">
                    <button class="cat current">坐标定位</button>
                    <button class="cat head">文字注记</button>
                    <div class="items">
                        <a href="#">分类注记</a>
                        <a href="#">通用注记</a>
                        <a href="#">变换字体</a>
                        <a href="#">定义字型</a>
                        <a href="#">特殊注记</a>
                        <a href="#">常用文字</a>
                    </div>
                    <button class="cat">控制点</button>
                    <button class="cat">水系设施</button>
                    <button class="cat">居民地</button>
                    <button class="cat">独立地物</button>
                    <button class="cat">交通设施</button>
                    <button class="cat">管线设施</button>
                    <button class="cat">境界线</button>
                    <button class="cat">地貌土质</button>
                    <button class="cat">植被土质</button>
                    <button class="cat">市政部件</button>
                </div>
            </div>
        </aside>
    </div>

    <footer class="status">
        <span class="coords">89454.3184, 17174.6149, 0.0000</span>
        <button>捕捉</button>
        <button>栅格</button>
        <button>正交</button>
        <button>极轴</button>
        <button class="down">对象捕捉</button>
        <button class="down">对象追踪</button>
        <button class="down mono">DUCS</button>
        <button class="down mono">DYN</button>
        <button class="down">线宽</button>
        <button class="down">模型</button>
        <span class="scale">注释比例:</span>
    </footer>

    <!-- Input method bar floats over the window -->
    <div class="ime">
        <svg class="sogou" viewBox="0 0 26 22"><path d="M1 5L21 0l5 20-21 5z" fill="#f4511e"/><path d="M20 6Q10 3 8 8q1 3 7 3t4 4q-4 4-12 2" fill="none" stroke="#fff" stroke-width="3"/></svg>
        <span>中</span>
        <svg viewBox="0 0 14 14"><circle cx="4" cy="5" r="2"/><path d="M10 8h3q0 4-3 5z"/></svg>
        <svg viewBox="0 0 14 14"><rect x="5" y="1" width="4" height="8" rx="2"/><path d="M2 6q0 5 5 5t5-5M7 11v3" fill="none" stroke="#1a73d9" stroke-width="2"/></svg>
        <svg viewBox="0 0 14 14"><rect x="1" y="2" width="12" height="10" rx="1"/><path d="M3 5h9M3 7h9" stroke="#fff" stroke-dasharray="1 1"/><path d="M4 10h6" stroke="#fff"/></svg>
        <svg viewBox="0 0 14 14"><path d="M1 3l4-2q2 2 4 0l4 2-1 4h-2v6H4V7H2z"/></svg>
        <svg viewBox="0 0 14 14"><rect x="1" y="1" width="5" height="5" rx="1" fill="#7a5be8"/><circle cx="10" cy="4" r="3" fill="#5b4be0"/><rect x="1" y="8" width="5" height="5" rx="1" fill="#b8609a"/><rect x="8" y="8" width="5" height="5" rx="1" fill="#5b7bf0"/></svg>
    </div>
</body>
</html>
```
FILE: styles.css
```css
* {
    box-sizing: border-box;
}

body {
    margin: 0;
    height: 100vh;
    display: flex;
    flex-direction: column;
    overflow: hidden;
    position: relative;
    background: #f0f0f0;
    color: #000;
    font-family: Roboto, "Noto Sans CJK SC", sans-serif;
    font-size: 11px;
}

button, input, select {
    margin: 0;
    padding: 0;
    border: none;
    border-radius: 0;
    background: none;
    color: inherit;
    font: inherit;
}

svg {
    display: block;
    flex: none;
}

.sprite {
    position: absolute;
    width: 0;
    height: 0;
}

/* Icon colours */
.k { fill: none; stroke: #222; }
.k2 { fill: none; stroke: #222; stroke-width: 2; }
.fk { fill: #111; }
.b { fill: none; stroke: #2a62a4; }
.b2 { fill: none; stroke: #2f5f96; stroke-width: 2; }
.fb { fill: #2c67a8; }
.nv { fill: #1d4a80; }
.lb { fill: #cfe4f5; stroke: #5682a8; }
.ld { fill: #dcebf8; stroke: #2c3c50; }
.y { fill: #f2d648; stroke: #a08a30; }
.yf { fill: #ffd83a; }
.yk { fill: #d8d020; stroke: #222; }
.or { fill: #e2b04c; stroke: #8a6a28; }
.ol { fill: none; stroke: #8a9a10; stroke-width: 2; }
.br { fill: #b88a28; stroke: #6a4a10; }
.rd { fill: #cf3a24; stroke: #803020; }
.hand { fill: #c4857c; stroke: #8c4c48; }
.pl { fill: #c8cce4; stroke: #545c88; }
.lens { fill: #dcebf6; stroke: #55708c; stroke-width: 2; }
.h { fill: none; stroke: #8c5c3c; stroke-width: 2; }
.w { fill: #fff; stroke: #222; }
.fw { fill: #e8f0f8; }
.wl { fill: none; stroke: #fff; stroke-width: 2; }
.g { fill: none; stroke: #9a9a9a; }
.gr { fill: none; stroke: #b8b8b8; stroke-width: 2; }
.fg { fill: #aaa; }
.cy { fill: #c8ecff; stroke: #1a78b0; }
.gn { fill: none; stroke: #2a7858; }

/* Title and menu */
.titlebar {
    flex: none;
    height: 20px;
    display: flex;
    align-items: center;
    background: #fff;
}

.logo {
    width: 14px;
    height: 14px;
    margin-left: 2px;
}

.titlebar h1 {
    margin: 0;
    font-size: 11px;
    font-weight: normal;
    line-height: 20px;
}

.winbtns {
    display: flex;
    margin-left: auto;
}

.winbtns button {
    width: 39px;
    display: flex;
    justify-content: center;
}

.winbtns svg {
    width: 10px;
    height: 10px;
    fill: none;
    stroke: #222;
}

.menubar {
    flex: none;
    height: 16px;
    display: flex;
    align-items: center;
    background: #fff;
}

.docicon {
    width: 14px;
    height: 14px;
    margin-left: 7px;
}

.menubar > button {
    padding: 0 4px;
    line-height: 16px;
    white-space: nowrap;
}

.docbtns {
    display: flex;
    gap: 1px;
    margin-left: auto;
}

.docbtns button {
    width: 15px;
    height: 15px;
    border: 1px solid #e4e4e4;
    display: flex;
    align-items: center;
    justify-content: center;
}

.docbtns svg {
    width: 10px;
    height: 10px;
    fill: none;
    stroke: #6d7f92;
}

/* Horizontal toolbars */
.row {
    flex: none;
    height: 24px;
    display: flex;
}

.toolbar {
    display: flex;
    align-items: center;
    border-top: 1px solid #fff;
    border-right: 2px solid #b4b4b4;
    border-bottom: 1px solid #b4b4b4;
}

.grip {
    flex: none;
    width: 6px;
    height: 20px;
    margin: 0 1px 0 3px;
    border: 1px solid #b4b4b4;
    border-width: 0 1px;
    background: linear-gradient(90deg, #fff 2px, #b4b4b4 2px, #b4b4b4 3px, #fff 3px);
}

.sep {
    flex: none;
    width: 1px;
    height: 16px;
    margin: 0 3px;
    background: #8c8c8c;
}

.tool {
    flex: none;
    width: 19px;
    height: 19px;
    display: flex;
    align-items: center;
    justify-content: center;
}

.tool svg {
    width: 15px;
    height: 15px;
}

.tool.drop {
    width: 10px;
}

.tool.drop svg {
    width: 8px;
}

.combo {
    height: 18px;
    display: flex;
    align-items: center;
    border: 1px solid #dadada;
    background: #f0f0f0;
    color: #666;
}

.combo svg {
    width: 14px;
    height: 14px;
}

.combo select {
    flex: 1;
    min-width: 0;
    height: 16px;
    padding-left: 2px;
    appearance: none;
    font: 9px "Liberation Mono", "Noto Sans CJK SC", monospace;
}

.combo .chev {
    width: 15px;
    height: 16px;
    padding: 2px 1px;
    background: #fff;
}

.layer {
    width: 250px;
    padding-left: 1px;
}

.style {
    width: 100px;
}

.style select {
    padding-left: 12px;
}

.color {
    width: 126px;
    padding-left: 2px;
}

.ltype {
    width: 133px;
}

.lweight {
    width: 104px;
}

.combo.plot {
    width: 100px;
}

.plot select {
    padding-left: 6px;
    font-size: 10px;
}

.rule {
    width: 30px;
    height: 1px;
    margin: 0 0 0 3px;
    background: #666;
}

.rule.long {
    width: 51px;
}

/* Work area */
.workspace {
    flex: 1;
    min-height: 0;
    display: flex;
}

.main {
    flex: 1;
    min-width: 0;
    display: flex;
    flex-direction: column;
}

.editor {
    flex: 1;
    min-height: 0;
    display: flex;
    overflow: hidden;
    border-bottom: 2px solid #8c8c8c;
}

.side {
    flex: none;
    overflow: hidden;
}

.left {
    width: 23px;
    border-right: 2px solid #a0a0a0;
}

.right {
    width: 27px;
    padding-left: 2px;
}

.vbar {
    width: 21px;
    display: flex;
    flex-direction: column;
    align-items: center;
    border-right: 1px solid #b4b4b4;
    border-bottom: 1px solid #b4b4b4;
}

.vbar .tool {
    flex: 1 1 0;
    min-height: 0;
}

.hgrip {
    flex: none;
    width: 16px;
    height: 5px;
    margin: 2px 0;
    border: 1px solid #b4b4b4;
    border-width: 1px 0;
    background: #fff;
}

.draw {
    height: 328px;
}

.survey {
    height: 142px;
    padding-top: 2px;
}

.modify {
    height: 308px;
}

.redo-all {
    color: #f00;
    font-size: 13px;
    line-height: 16px;
}

.viewport {
    flex: 1;
    min-width: 0;
    display: flex;
    flex-direction: column;
    border-top: 1px solid #777;
}

.drawing {
    flex: 1;
    min-height: 0;
    width: 100%;
    background: #000;
}

.elev {
    fill: #f00;
    stroke: #f00;
    stroke-width: 1;
    font: 39px "Noto Sans CJK SC", sans-serif;
}

.pts {
    fill: #f00;
}

.contour {
    fill: none;
    stroke: #ff0;
    stroke-width: 3;
}

.index {
    fill: none;
    stroke: #0f0;
    stroke-width: 6;
}

.picked {
    fill: none;
    stroke: url(#sel);
    stroke-width: 4;
}

.pickbox {
    fill: #000;
    stroke: #ddd;
}

.tip {
    fill: #15125c;
    stroke: #8c8cb4;
}

.tiptext {
    fill: #d4d4dc;
    font-size: 10px;
}

.tabs {
    flex: none;
    height: 16px;
    display: flex;
    padding-left: 2px;
    font: 10px "Liberation Mono", "Noto Sans CJK SC", monospace;
}

.nav {
    width: 12px;
    height: 13px;
    padding: 2px 1px;
    border-right: 1px solid #b4b4b4;
}

.nav svg {
    width: 8px;
    height: 8px;
    fill: #777;
}

.tab {
    height: 13px;
    line-height: 13px;
    padding: 0 1px 0 5px;
}

.tab.active {
    padding: 0 7px 0 8px;
    background: #000;
    color: #fff;
    clip-path: polygon(0 0, 100% 0, 84% 100%, 16% 100%);
}

.slash {
    width: 8px;
    height: 14px;
    fill: none;
    stroke: #666;
}

/* Command window */
.command {
    flex: none;
    display: flex;
    padding: 8px 10px 2px 2px;
}

.command .grip {
    height: 46px;
    margin-right: 3px;
}

.console {
    flex: 1;
    min-width: 0;
    border-top: 2px solid #777;
    border-left: 1px solid #777;
    background: #fff;
    font: 13px/14px "Liberation Mono", "Noto Sans CJK SC", monospace;
}

.history {
    display: flex;
    border-bottom: 1px solid #999;
}

.lines {
    flex: 1;
    padding: 0 0 2px 1px;
}

.lines p {
    margin: 0;
    height: 14px;
}

.vscroll {
    width: 14px;
    display: flex;
    flex-direction: column;
    justify-content: space-around;
    align-items: center;
    background: #f0f0f0;
}

.vscroll svg, .hscroll svg {
    width: 8px;
    height: 8px;
    fill: none;
    stroke: #444;
    stroke-width: 2;
}

.prompt {
    height: 15px;
    display: flex;
    align-items: center;
    padding-left: 1px;
}

.prompt input {
    flex: 1;
    min-width: 0;
    height: 15px;
    outline: none;
}

.hscroll {
    width: 73px;
    height: 15px;
    display: flex;
    align-items: center;
    gap: 4px;
    padding-left: 5px;
    background: #f0f0f0;
}

.thumb {
    width: 14px;
    height: 13px;
    margin-right: 12px;
    background: #cdcdcd;
}

/* Right dock */
.dock {
    flex: none;
    width: 80px;
    display: flex;
    flex-direction: column;
    border-left: 2px solid #8c8c8c;
    overflow: hidden;
}

.dockhead {
    flex: none;
    height: 13px;
    display: flex;
    align-items: center;
    gap: 3px;
    padding: 1px 4px 0 5px;
}

.dockhead button {
    width: 9px;
    height: 9px;
    border: 1px solid #aaa;
}

.dockhead svg {
    width: 7px;
    height: 7px;
    fill: none;
    stroke: #000;
    stroke-width: 2;
}

.dockhead .hgrip {
    flex: 1;
}

.dockbody {
    flex: 1;
    min-height: 0;
    display: flex;
}

.quick {
    flex: none;
    width: 17px;
    height: 259px;
    padding-top: 17px;
    border: none;
}

.quick .tool {
    width: 15px;
}

.quick .tool.on {
    background: #d4d4d4;
}

.panel {
    flex: 1;
    min-width: 0;
    display: flex;
    flex-direction: column;
    margin-right: 2px;
    background: #646e8e;
    font-size: 10px;
}

.cat {
    flex: none;
    height: 18px;
    line-height: 15px;
    background: #f0f0f0;
    border: 1px solid #888;
    border-bottom: 2px solid #111;
    border-left-color: #fff;
    border-top-color: #fff;
}

.cat.current {
    background: #fff;
    border: 2px solid #1a1aa0;
    line-height: 13px;
    color: #1a1aa0;
}

.cat.head {
    border-bottom-color: #888;
}

.items {
    flex: 1;
    min-height: 0;
    padding-top: 3px;
    text-align: center;
}

.items a {
    display: block;
    line-height: 22px;
    color: #f4f4f4;
    text-decoration: none;
}

/* Status bar */
.status {
    flex: none;
    height: 15px;
    display: flex;
    align-items: flex-start;
    gap: 3px;
    padding: 3px 0 0 4px;
    overflow: hidden;
    border-top: 1px solid #b4b4b4;
    font: 10px/18px "Liberation Sans", "Noto Sans CJK SC", sans-serif;
    white-space: nowrap;
}

.coords {
    width: 168px;
    height: 20px;
    border: 1px solid #999;
}

.status button {
    height: 20px;
    padding: 0 1px;
    border: 1px solid #f0f0f0;
    border-right-color: #aaa;
}

.status .down {
    border: 1px solid #222;
}

.status .mono {
    font: 9px/18px "Liberation Mono", monospace;
}

.status .scale {
    margin-left: auto;
    padding-right: 138px;
}

/* Input method */
.ime {
    position: absolute;
    right: 2px;
    bottom: 0;
    height: 17px;
    display: flex;
    align-items: center;
    gap: 6px;
    padding-right: 3px;
    background: #fff;
    border-top: 1px solid #b4d0ec;
    color: #1a73d9;
    font-size: 13px;
    font-weight: bold;
    line-height: 16px;
}

.ime svg {
    width: 14px;
    height: 14px;
    fill: #1a73d9;
}

.ime .sogou {
    width: 26px;
    height: 22px;
}
```
